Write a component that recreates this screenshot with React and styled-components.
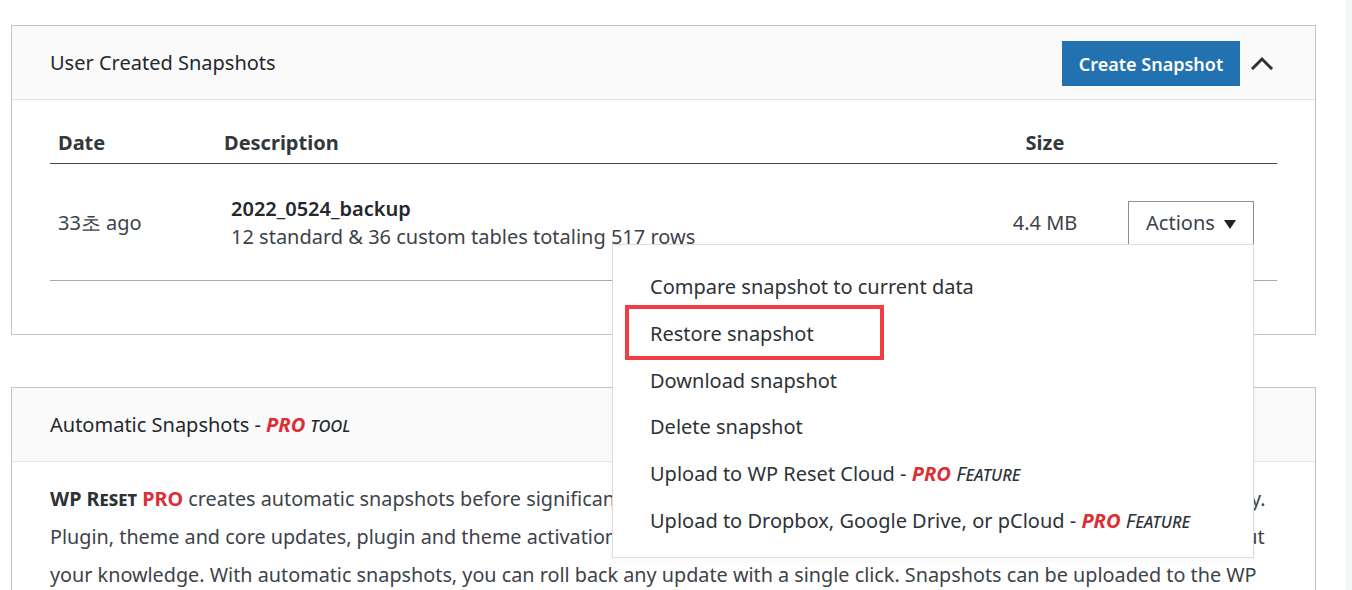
import React from "react";
import styled, { createGlobalStyle } from "styled-components";

const GlobalStyle = createGlobalStyle`
  html, body {
    margin: 0;
    padding: 0;
    background: #ffffff;
  }
  body {
    font-family: "Noto Sans", "Open Sans", sans-serif;
    color: #3c434a;
    overflow: hidden;
  }
`;

const menuItems = [
  { label: "Compare snapshot to current data" },
  { label: "Restore snapshot", marked: true },
  { label: "Download snapshot" },
  { label: "Delete snapshot" },
  { label: "Upload to WP Reset Cloud", pro: true },
  { label: "Upload to Dropbox, Google Drive, or pCloud", pro: true },
];

const ChevronUp = () => (
  <svg width="24" height="14" viewBox="0 0 24 14">
    <polyline
      points="3,12 12,3 21,12"
      fill="none"
      stroke="#2c3338"
      strokeWidth="3"
      strokeLinecap="square"
    />
  </svg>
);

const App = () => {
  return (
    <>
      <GlobalStyle />
      <Page>
        <Main>
          <Card>
            <CardHeader>
              <CardTitle>User Created Snapshots</CardTitle>
              <HeaderActions>
                <PrimaryButton>Create Snapshot</PrimaryButton>
                <Toggle>
                  <ChevronUp />
                </Toggle>
              </HeaderActions>
            </CardHeader>
            <CardBody>
              <Table>
                <HeadRow>
                  <HeadCell>Date</HeadCell>
                  <HeadCell>Description</HeadCell>
                  <HeadCell $center>Size</HeadCell>
                  <HeadCell />
                </HeadRow>
                <BodyRow>
                  <Cell>33초 ago</Cell>
                  <Cell $indent>
                    <SnapName>2022_0524_backup</SnapName>
                    <SnapInfo>12 standard &amp; 36 custom tables totaling 517 rows</SnapInfo>
                  </Cell>
                  <Cell $center>4.4 MB</Cell>
                  <ActionsCell>
                    <ActionsButton>
                      Actions <Caret />
                    </ActionsButton>
                    <Dropdown>
                      {menuItems.map((item) => (
                        <MenuItem key={item.label}>
                          {item.label}
                          {item.pro && (
                            <>
                              {" - "}
                              <ProBadge $italic>PRO</ProBadge> <SmallCapsItalic>Feature</SmallCapsItalic>
                            </>
                          )}
                        </MenuItem>
                      ))}
                      <Highlight />
                    </Dropdown>
                  </ActionsCell>
                </BodyRow>
              </Table>
            </CardBody>
          </Card>

          <Card>
            <CardHeader>
              <CardTitle>
                Automatic Snapshots - <ProBadge $italic>PRO</ProBadge> <SmallCapsItalic>tool</SmallCapsItalic>
              </CardTitle>
            </CardHeader>
            <TextBody>
              <Line>
                <Brand>WP Reset</Brand> <ProBadge>PRO</ProBadge> creates automatic snapshots before significant
                changes occur on your site, so that you can always undo them easily.
              </Line>
              <Line>
                Plugin, theme and core updates, plugin and theme activations, deactivations, and most other events
                can all break your site without
              </Line>
              your knowledge. With automatic snapshots, you can roll back any update with a single click. Snapshots
              can be uploaded to the WP Reset Cloud and kept safe for later use.
            </TextBody>
          </Card>
        </Main>
        <ScrollStrip />
      </Page>
    </>
  );
};

export default App;

const Page = styled.div`
  display: flex;
  height: 590px;
  overflow: hidden;
`;

const Main = styled.div`
  flex: 1;
  padding: 25px 30px 0 11px;
  display: flex;
  flex-direction: column;
  gap: 52px;
`;

const ScrollStrip = styled.div`
  width: 6px;
  background: #f6f7f7;
`;

const Card = styled.section`
  border: 1px solid #c3c4c7;
  background: #ffffff;
`;

const CardHeader = styled.div`
  height: 73px;
  display: flex;
  align-items: center;
  justify-content: space-between;
  padding: 0 41px 0 38px;
  background: #fafafa;
  border-bottom: 1px solid #e2e4e7;
`;

const CardTitle = styled.h2`
  margin: 0;
  font-size: 20px;
  font-weight: 400;
  color: #23282d;
`;

const HeaderActions = styled.div`
  display: flex;
  align-items: center;
  gap: 10px;
`;

const PrimaryButton = styled.button`
  height: 45px;
  width: 178px;
  border: 0;
  background: #2271b1;
  color: #ffffff;
  font-family: "Noto Sans", sans-serif;
  font-size: 18px;
  font-weight: 600;
  padding: 0;
  margin-top: 2px;
  cursor: pointer;
`;

const Toggle = styled.span`
  display: flex;
  width: 24px;
  height: 24px;
  align-items: center;
  justify-content: center;
`;

const CardBody = styled.div`
  padding: 23px 38px 53px;
`;

const Table = styled.div`
  display: grid;
  grid-template-columns: 166px 1fr 120px 172px;
`;

const HeadRow = styled.div`
  display: contents;
`;

const HeadCell = styled.div`
  padding: 8px;
  line-height: 24px;
  font-size: 20px;
  font-weight: 700;
  color: #32373c;
  text-align: ${(p) => (p.$center ? "center" : "left")};
  border-bottom: 1px solid #3c434a;
`;

const BodyRow = styled.div`
  display: contents;
`;

const Cell = styled.div`
  height: 115px;
  display: flex;
  flex-direction: column;
  justify-content: center;
  align-items: ${(p) => (p.$center ? "center" : "flex-start")};
  padding: 1px 8px 0 ${(p) => (p.$indent ? "15px" : "8px")};
  font-size: 20px;
  line-height: 28px;
  color: #3c434a;
  border-bottom: 1px solid #a7aaad;
`;

const SnapName = styled.div`
  font-weight: 600;
  color: #23282d;
`;

const SnapInfo = styled.div``;

const ActionsCell = styled(Cell)`
  position: relative;
  align-items: flex-end;
  padding-right: 23px;
`;

const ActionsButton = styled.button`
  width: 126px;
  height: 44px;
  background: #ffffff;
  border: 1px solid #8c8f94;
  font-family: "Noto Sans", sans-serif;
  font-size: 20px;
  color: #3c434a;
  padding: 0;
  display: flex;
  align-items: center;
  justify-content: center;
  gap: 9px;
`;

const Caret = styled.span`
  width: 0;
  height: 0;
  margin-top: 3px;
  border-left: 6px solid transparent;
  border-right: 6px solid transparent;
  border-top: 9px solid #1d2327;
`;

const Dropdown = styled.div`
  position: absolute;
  top: 80px;
  right: 23px;
  width: 640px;
  padding: 19px 0 12px;
  background: #ffffff;
  border: 1px solid #dcdcde;
  box-shadow: 0 2px 6px rgba(0, 0, 0, 0.04);
  z-index: 5;
`;

const MenuItem = styled.div`
  height: 46.8px;
  line-height: 46.8px;
  padding: 0 37px;
  font-size: 20px;
  color: #2c3338;
  white-space: nowrap;
`;

const Highlight = styled.div`
  position: absolute;
  left: 12px;
  top: 60px;
  width: 251px;
  height: 47px;
  border: 4px solid #f23d45;
`;

const ProBadge = styled.span`
  color: #dd2e36;
  font-weight: 700;
  font-style: ${(p) => (p.$italic ? "italic" : "normal")};
`;

const SmallCapsItalic = styled.span`
  font-style: italic;
  font-variant: small-caps;
`;

const Brand = styled.span`
  font-weight: 700;
  font-variant: small-caps;
  color: #2c3338;
`;

const TextBody = styled.p`
  margin: 0;
  padding: 18px 38px 40px;
  font-size: 19.8px;
  line-height: 38px;
  color: #3c434a;
`;

const Line = styled.span`
  display: block;
  white-space: nowrap;
`;
